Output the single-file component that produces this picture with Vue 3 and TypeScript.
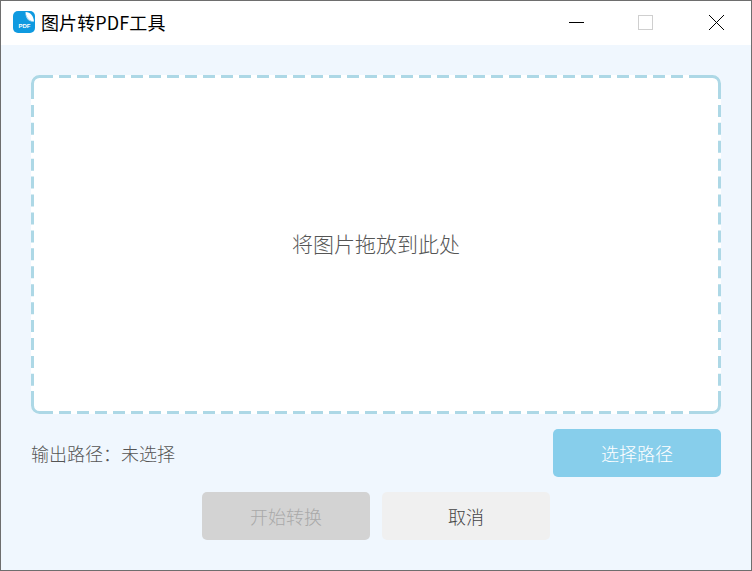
<script setup lang="ts">
const appTitle: string = '图片转PDF工具'
const outputLabel: string = '输出路径\uFF1A未选择'
</script>

<template>
  <div class="window">
    <header class="titlebar">
      <div class="brand">
        <svg class="logo" width="22" height="22" viewBox="0 0 22 22">
          <rect width="22" height="22" rx="5" fill="#0f9ae0" />
          <path d="M12.5 1 C17.5 1 20.5 5 21 10.5 C16.5 10.5 13 6.5 12.5 1 Z" fill="#fff" />
          <path d="M12.5 1 C13 6.5 16.5 10.5 21 10.5 C17 11.5 12 8 12.5 1 Z" fill="#cfe6f4" />
          <text x="11.5" y="17" text-anchor="middle" class="logo-text">PDF</text>
        </svg>
        <span class="title">{{ appTitle }}</span>
      </div>
      <div class="controls">
        <svg class="ctl" width="46" height="44" viewBox="0 0 46 44">
          <path d="M16 21.5 H31" stroke="#000" stroke-width="1" />
        </svg>
        <svg class="ctl" width="46" height="44" viewBox="0 0 46 44">
          <rect x="15.5" y="14.5" width="14" height="14" fill="none" stroke="#cfcfcf" stroke-width="1" />
        </svg>
        <svg class="ctl" width="46" height="44" viewBox="0 0 46 44">
          <path d="M16 14 L31 29 M31 14 L16 29" stroke="#000" stroke-width="1" />
        </svg>
      </div>
    </header>

    <main class="content">
      <section class="dropzone">
        <svg class="dash" width="690" height="339" viewBox="0 0 690 339">
          <g class="dash-line">
            <path d="M1.5 24 V8.5 A7 7 0 0 1 8.5 1.5 H22" />
            <path d="M668 1.5 H681.5 A7 7 0 0 1 688.5 8.5 V24" />
            <path d="M1.5 316 V330.5 A7 7 0 0 0 8.5 337.5 H22" />
            <path d="M668 337.5 H681.5 A7 7 0 0 0 688.5 330.5 V316" />
            <path class="h" d="M28 1.5 H668" />
            <path class="h" d="M28 337.5 H668" />
            <path class="v" d="M1.5 29.9 V316" />
            <path class="v" d="M688.5 29.9 V316" />
          </g>
        </svg>
        <span class="drop-text">将图片拖放到此处</span>
      </section>

      <div class="path-row">
        <span class="path-label">{{ outputLabel }}</span>
        <button class="btn btn-select" type="button">选择路径</button>
      </div>

      <div class="actions">
        <button class="btn btn-start" type="button" disabled>开始转换</button>
        <button class="btn btn-cancel" type="button">取消</button>
      </div>
    </main>
  </div>
</template>

<style>
html, body { margin: 0; padding: 0; background: #f0f7fd; }
</style>

<style scoped>
.window {
  box-sizing: border-box;
  width: 752px;
  height: 571px;
  border: 1px solid #6e6e6e;
  display: flex;
  flex-direction: column;
  background: #f0f7fe;
  font-family: "Noto Sans CJK SC", "Noto Sans", sans-serif;
  font-weight: 300;
  overflow: hidden;
}
.titlebar {
  height: 44px;
  flex: none;
  background: #fff;
  display: flex;
  align-items: center;
  justify-content: space-between;
}
.brand {
  display: flex;
  align-items: center;
  gap: 6px;
  padding-left: 12px;
}
.logo { display: block; margin-bottom: 2px; }
.logo-text {
  font-family: "Liberation Sans", sans-serif;
  font-size: 6px;
  font-weight: 700;
  fill: #fff;
}
.title {
  font-size: 18px;
  font-weight: 400;
  color: #000;
  line-height: 24px;
  letter-spacing: 0.1px;
  margin-bottom: 2px;
}
.controls {
  display: flex;
  padding-right: 12px;
  gap: 24px;
}
.ctl { display: block; }
.content {
  flex: 1;
  display: flex;
  flex-direction: column;
  padding: 30px 30px 0;
}
.dropzone {
  position: relative;
  height: 339px;
  background: #fff;
  border-radius: 8px;
  display: flex;
  align-items: center;
  justify-content: center;
}
.dash { position: absolute; inset: 0; }
.dash-line {
  fill: none;
  stroke: #add8e6;
  stroke-width: 3;
}
.h { stroke-dasharray: 12 6; }
.v { stroke-dasharray: 12 5.93; }
.drop-text {
  font-size: 21px;
  color: #555;
  line-height: 30px;
  margin-bottom: 4px;
}
.path-row {
  display: flex;
  align-items: center;
  justify-content: space-between;
  margin-top: 15px;
}
.path-label {
  font-size: 18px;
  color: #555;
}
.btn {
  width: 168px;
  height: 48px;
  border: 0;
  border-radius: 5px;
  font-family: inherit;
  font-weight: inherit;
  font-size: 18px;
  padding: 0;
}
.btn-select { background: #87ceeb; color: #fff; }
.actions {
  display: flex;
  justify-content: center;
  gap: 12px;
  margin-top: 15px;
}
.btn-start { background: #d3d3d3; color: #a9a9a9; }
.btn-cancel { background: #f0f0f0; color: #444; }
</style>
